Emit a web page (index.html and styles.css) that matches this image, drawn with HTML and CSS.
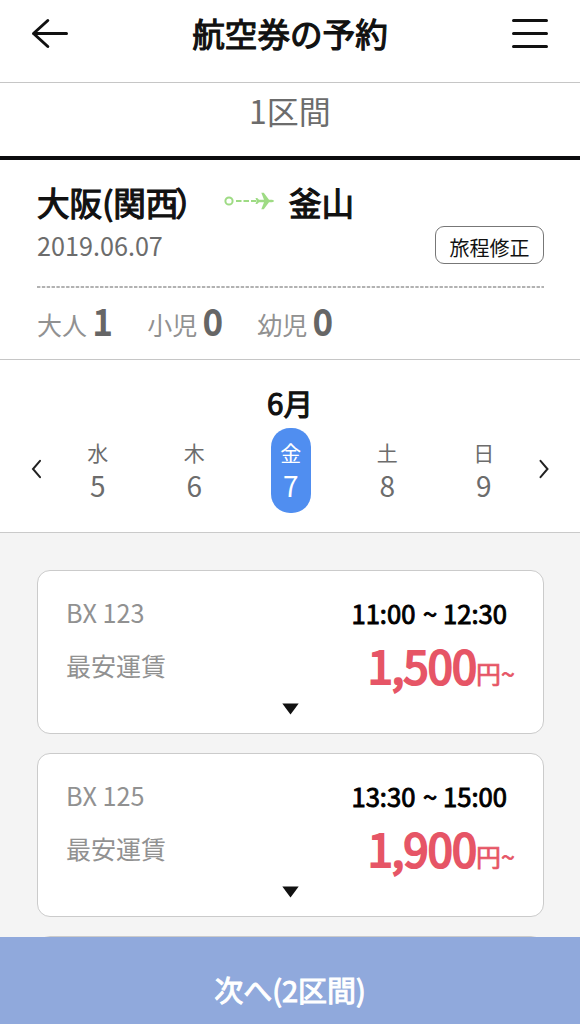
FILE: index.html
```html
<!DOCTYPE html>
<html lang="ja">
<head>
    <meta charset="UTF-8">
    <meta name="viewport" content="width=device-width, initial-scale=1.0">
    <title>航空券の予約</title>
    <link rel="stylesheet" href="styles.css">
</head>
<body>
    <header class="header">
        <svg class="header-icon" viewBox="0 0 38 32" aria-label="戻る">
            <path d="M16.8 3.5L2.5 16.5L16.8 29.5M2.5 16.5H35.5"/>
        </svg>
        <h1>航空券の予約</h1>
        <svg class="header-icon" viewBox="0 0 38 32" aria-label="メニュー">
            <path d="M2.5 3.5H35.5M2.5 16.5H35.5M2.5 29.5H35.5"/>
        </svg>
    </header>

    <div class="section-tab">1区間</div>

    <section class="trip">
        <div class="route">
            <span class="from">大阪(関西<span class="paren">）</span></span>
            <svg class="plane" viewBox="0 0 50 18">
                <circle cx="5" cy="9" r="3.6"/>
                <path class="line" d="M12 9H32"/>
                <path class="body" d="M31.5 6H33.2L35 7.8H40L37.3 .8H39.8L45 7.8H48Q50 8 50 9Q50 10 48 10.2H45L39.8 17.2H37.3L40 10.2H35L33.2 12H31.5L32.6 9Z"/>
            </svg>
            <span>釜山</span>
        </div>
        <div class="trip-date">
            <span>2019.06.07</span>
            <button type="button">旅程修正</button>
        </div>
        <svg class="divider" viewBox="0 0 507 2"><path d="M0 1H507"/></svg>
        <div class="passengers">
            <div class="passenger">大人<b>1</b></div>
            <div class="passenger">小児<b>0</b></div>
            <div class="passenger">幼児<b>0</b></div>
        </div>
    </section>

    <section class="calendar">
        <h2>6月</h2>
        <div class="week">
            <svg class="arrow" viewBox="0 0 10 20"><path d="M9 1.8L2 10L9 18.2"/></svg>
            <div class="days">
                <div class="day"><span>水</span><b>5</b></div>
                <div class="day"><span>木</span><b>6</b></div>
                <div class="day selected"><span>金</span><b>7</b></div>
                <div class="day"><span>土</span><b>8</b></div>
                <div class="day"><span>日</span><b>9</b></div>
            </div>
            <svg class="arrow" viewBox="0 0 10 20"><path d="M1.5 1.8L8.5 10L1.5 18.2"/></svg>
        </div>
    </section>

    <main class="flights">
        <div class="card">
            <div class="flight">
                <span class="number">BX 123</span>
                <span class="time">11:00 <i>~</i> 12:30</span>
            </div>
            <div class="fare">
                <span class="fare-label">最安運賃</span>
                <span class="price"><b>1,500</b>円~</span>
            </div>
            <svg class="toggle" viewBox="0 0 17 12"><path d="M.3 .5H16.7L8.5 11.5Z"/></svg>
        </div>
        <div class="card">
            <div class="flight">
                <span class="number">BX 125</span>
                <span class="time">13:30 <i>~</i> 15:00</span>
            </div>
            <div class="fare">
                <span class="fare-label">最安運賃</span>
                <span class="price"><b>1,900</b>円~</span>
            </div>
            <svg class="toggle" viewBox="0 0 17 12"><path d="M.3 .5H16.7L8.5 11.5Z"/></svg>
        </div>
        <div class="card"></div>
    </main>

    <footer class="next">次へ(2区間)</footer>
</body>
</html>
```

FILE: styles.css
```css
* {
    box-sizing: border-box;
}

body {
    margin: 0;
    height: 100vh;
    overflow: hidden;
    display: flex;
    flex-direction: column;
    background-color: #fff;
    color: #111;
    font-family: "Noto Sans CJK JP", sans-serif;
}

h1, h2, b {
    margin: 0;
    font-weight: 400;
}

svg {
    display: block;
    flex-shrink: 0;
}

/* header */
.header {
    flex: none;
    height: 83px;
    padding: 0 31px 17px;
    display: flex;
    align-items: center;
    justify-content: space-between;
    border-bottom: 1.5px solid #c6c6c6;
}

.header h1 {
    font-size: 32.6px;
    line-height: 48px;
    -webkit-text-stroke: 1.2px #111;
}

.header-icon {
    width: 38px;
    height: 32px;
    fill: none;
    stroke: #111;
    stroke-width: 3;
    stroke-linecap: round;
    stroke-linejoin: round;
}

.section-tab {
    flex: none;
    height: 77px;
    padding-top: 2px;
    border-bottom: 4px solid #0c0c0e;
    font-size: 32px;
    line-height: 50px;
    text-align: center;
    color: #6c6c6c;
}

/* trip summary */
.trip {
    flex: none;
    height: 200px;
    padding: 21px 36px 0 37px;
    border-bottom: 1.5px solid #c6c6c6;
}

.route {
    display: flex;
    align-items: center;
    height: 42px;
    font-size: 32.6px;
    line-height: 42px;
    -webkit-text-stroke: 1.2px #111;
}

.from {
    width: 187px;
    white-space: nowrap;
}

.paren {
    margin-left: -3px;
}

.plane {
    width: 50px;
    height: 18px;
    margin: 0 15px 3px 0;
}

.plane circle {
    fill: none;
    stroke: #9edb84;
    stroke-width: 2;
}

.plane .line {
    stroke: #9edb84;
    stroke-width: 1.8;
    stroke-dasharray: 5.5 2;
}

.plane .body {
    fill: #9edb84;
}

.trip-date {
    display: flex;
    align-items: center;
    justify-content: space-between;
    margin-top: 3px;
    height: 38px;
    font-size: 25.2px;
    color: #6c6c6c;
}

.trip-date button {
    width: 109px;
    height: 38px;
    padding: 5px 0 0;
    border: 1.5px solid #777;
    border-radius: 9px;
    background-color: #fff;
    font-family: inherit;
    font-size: 20px;
    line-height: 30px;
    color: #111;
}

.divider {
    width: 507px;
    height: 2px;
    margin-top: 22px;
    stroke: #999;
    stroke-width: 1.3;
    stroke-dasharray: 3.4 1.45;
}

.passengers {
    display: flex;
    gap: 35px;
    margin-top: 7px;
}

.passenger {
    display: flex;
    align-items: baseline;
    font-size: 25px;
    line-height: 50px;
    color: #919191;
}

.passenger b {
    margin-left: 6px;
    font-size: 34.5px;
    color: #666;
    -webkit-text-stroke: 1.8px #666;
}

/* calendar */
.calendar {
    flex: none;
    height: 173px;
    padding-top: 21px;
    border-bottom: 1.5px solid #cacaca;
}

.calendar h2 {
    font-size: 29.5px;
    line-height: 42px;
    text-align: center;
    -webkit-text-stroke: 1.2px #111;
}

.week {
    display: flex;
    align-items: center;
    justify-content: space-between;
    margin-top: 5px;
    padding: 0 31px;
}

.arrow {
    width: 10px;
    height: 20px;
    margin-bottom: 4px;
    fill: none;
    stroke: #222;
    stroke-width: 2;
    stroke-linecap: round;
}

.days {
    display: flex;
    gap: 56.5px;
    margin-left: 1.5px;
}

.day {
    width: 40px;
    height: 85px;
    padding-top: 8px;
    border-radius: 19px;
    display: flex;
    flex-direction: column;
    align-items: center;
    color: #6c6c6c;
}

.day span {
    font-size: 21px;
    line-height: 32px;
}

.day b {
    font-size: 28px;
    line-height: 35px;
}

.day.selected {
    background-color: #508ef0;
    color: #fff;
}

/* flight list */
.flights {
    flex: 1;
    min-height: 0;
    overflow: hidden;
    padding: 37px 36px 0 37px;
    background-color: #f4f4f4;
}

.card {
    height: 164px;
    margin-bottom: 19px;
    padding: 22px 28px 0;
    border: 1.5px solid #cbcbcb;
    border-radius: 13px;
    background-color: #fff;
}

.flight {
    display: flex;
    justify-content: space-between;
    padding-right: 8px;
    line-height: 39px;
}

.number {
    font-size: 25.2px;
    color: #919191;
}

.time {
    font-size: 25.6px;
    color: #000;
    -webkit-text-stroke: .9px #000;
}

.time i {
    margin-left: 2px;
    font-style: normal;
}

.fare {
    display: flex;
    justify-content: space-between;
    height: 62px;
    line-height: 66px;
}

.fare-label {
    font-size: 25px;
    color: #919191;
}

.price {
    font-size: 25px;
    color: #e65566;
    -webkit-text-stroke: .7px #e65566;
}

.price b {
    font-size: 45px;
    letter-spacing: -.8px;
    -webkit-text-stroke: 2.2px #e65566;
}

.toggle {
    width: 17px;
    height: 12px;
    margin: 9px auto 0;
    fill: #111;
}

/* next button */
.next {
    flex: none;
    height: 87px;
    padding-top: 30px;
    background-color: #90a9dc;
    font-size: 29px;
    line-height: 44px;
    text-align: center;
    color: #fff;
    -webkit-text-stroke: 1px #fff;
}
```
